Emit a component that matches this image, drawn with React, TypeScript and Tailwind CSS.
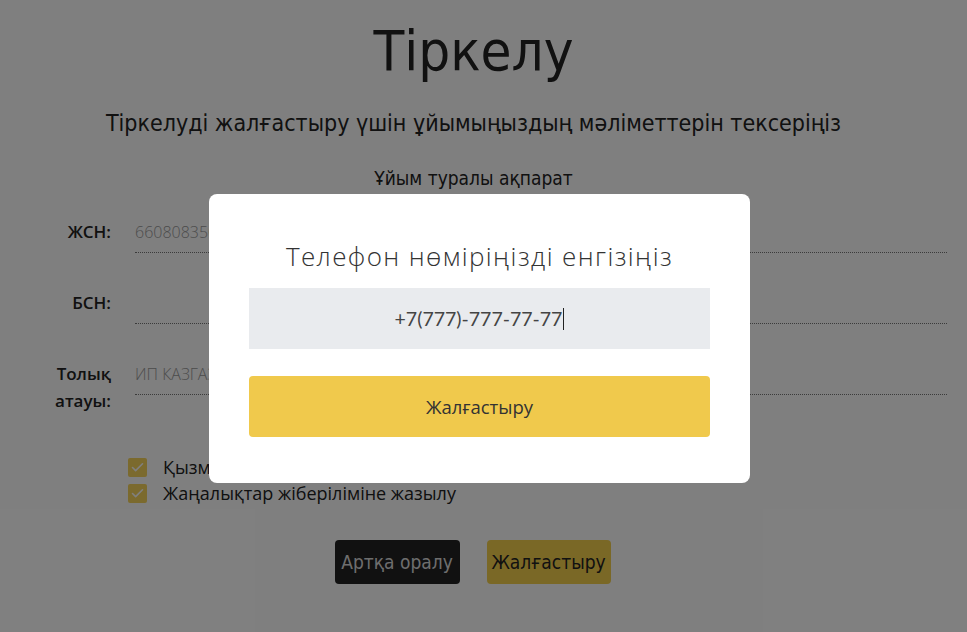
import { Check } from "lucide-react";

const narrow = { fontFamily: '"Liberation Sans Narrow", "DejaVu Sans Condensed", sans-serif' };

function Field({ label, value }: { label: React.ReactNode; value: string }) {
  return (
    <div className="flex items-start">
      <div className="w-[111px] shrink-0 text-right text-[17px] font-semibold leading-[27px] text-[#222]">
        {label}
      </div>
      <div className="ml-[24px] flex-1 border-b border-dotted border-[#777] pb-[8px] pt-[2px] text-[16px] font-light leading-[24px] text-[#999]">
        {value || "\u00a0"}
      </div>
    </div>
  );
}

function Box({ text }: { text: string }) {
  return (
    <label className="flex items-center gap-[16px]">
      <span className="grid h-[19px] w-[19px] place-items-center rounded-[2px] bg-[#f7d45c]">
        <Check size={15} strokeWidth={2.5} className="text-white" />
      </span>
      <span className="text-[18px] leading-[26px] text-[#222]">{text}</span>
    </label>
  );
}

export default function App() {
  return (
    <div
      className="relative h-[632px] w-full overflow-hidden bg-white"
      style={{ fontFamily: '"Open Sans", sans-serif' }}
    >
      <div className="w-[947px]">
        <div className="flex flex-col items-center pt-[16px]">
          <h1 className="text-[56px] leading-[70px] text-[#222]" style={narrow}>
            Тіркелу
          </h1>
          <p className="mt-[22px] text-[23px] leading-[30px] text-[#222]" style={narrow}>
            Тіркелуді жалғастыру үшін ұйымыңыздың мәліметтерін тексеріңіз
          </p>
          <p className="mt-[28px] text-[19px] leading-[24px] text-[#222]" style={narrow}>
            Ұйым туралы ақпарат
          </p>
        </div>

        <div className="mt-[28px] flex flex-col gap-[36px]">
          <Field label="ЖСН:" value="660808350123" />
          <Field label="БСН:" value="" />
          <Field
            label={
              <>
                Толық
                <br />
                атауы:
              </>
            }
            value="ИП КАЗГАЗСЕРВИС"
          />
        </div>

        <div className="ml-[128px] mt-[40px] flex flex-col">
          <Box text="Қызмет көрсету шарттары мен құпиялылық саясатымен келісемін" />
          <Box text="Жаңалықтар жіберіліміне жазылу" />
        </div>

        <div className="mt-[34px] flex justify-center gap-[27px] pr-[2px]">
          <button
            className="h-[44px] w-[125px] rounded-[4px] bg-[#222] text-[19px] text-[#ddd]"
            style={narrow}
          >
            Артқа оралу
          </button>
          <button
            className="h-[44px] w-[124px] rounded-[4px] bg-[#f5d04c] text-[19px] text-[#222]"
            style={narrow}
          >
            Жалғастыру
          </button>
        </div>
      </div>

      <div className="absolute inset-0 bg-black/50" />

      <div className="absolute left-[209px] top-[194px] w-[541px] rounded-[8px] bg-white px-[40px] pb-[46px] pt-[44px]">
        <h2 className="text-center text-[26px] font-light leading-[36px] tracking-[1.4px] text-[#333]">
          Телефон нөміріңізді енгізіңіз
        </h2>
        <div
          className="mt-[14px] flex h-[61px] items-center justify-center bg-[#e9ebee] text-[19.5px] text-[#444]"
          style={{ fontFamily: "Lato, sans-serif" }}
        >
          +7(777)-777-77-77<span className="ml-[1px] inline-block h-[22px] w-[1px] bg-[#222]" />
        </div>
        <button className="mt-[27px] h-[61px] w-full rounded-[4px] bg-[#f0c94c] text-[18.5px] text-[#333]">
          Жалғастыру
        </button>
      </div>
    </div>
  );
}
